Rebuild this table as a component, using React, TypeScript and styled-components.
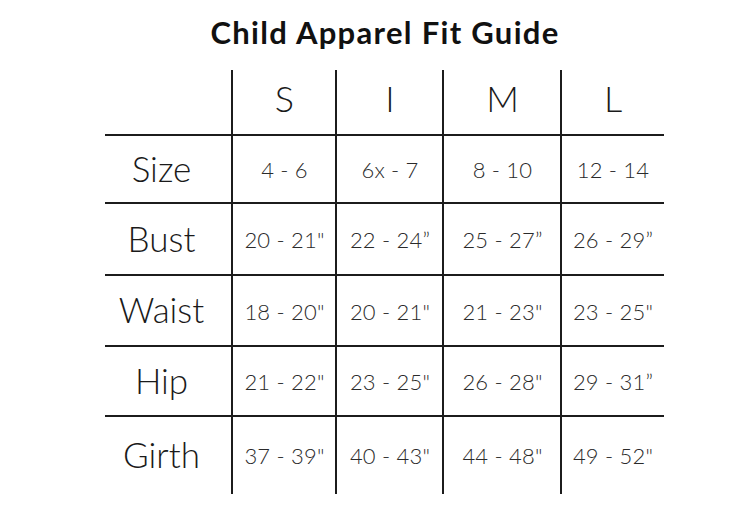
import * as React from 'react';
import styled, { createGlobalStyle } from 'styled-components';

const GlobalStyle = createGlobalStyle`
  html, body {
    margin: 0;
    padding: 0;
    background: #ffffff;
  }
  body {
    font-family: Lato, "Liberation Sans", sans-serif;
    color: #222;
  }
`;

const Page = styled.div`
  width: 740px;
  height: 520px;
  display: flex;
  flex-direction: column;
  align-items: flex-start;
`;

const Title = styled.h1`
  align-self: stretch;
  margin: 0;
  padding: 15px 0 21px 30px;
  height: 34px;
  line-height: 34px;
  text-align: center;
  font-size: 31px;
  font-weight: 700;
  letter-spacing: 1.3px;
  color: #111;
`;

const Table = styled.div`
  margin-left: 105px;
  display: grid;
  grid-template-columns: 127px 104px 107px 118px 103px;
  grid-template-rows: 65px 68px 72px 71px 70px 78px;
`;

const Cell = styled.div<{ $left?: boolean; $top?: boolean; $pad?: number }>`
  display: flex;
  align-items: center;
  justify-content: center;
  box-sizing: border-box;
  border-left: ${(p) => (p.$left ? '2px solid #1c1c1c' : 'none')};
  border-top: ${(p) => (p.$top ? '2px solid #1c1c1c' : 'none')};
  margin-left: ${(p) => (p.$left ? '-1px' : '0')};
  margin-top: ${(p) => (p.$top ? '-1px' : '0')};
  padding-right: ${(p) => p.$pad ?? 0}px;
`;

const HeadText = styled.span`
  font-size: 36px;
  font-weight: 300;
  color: #1a1a1a;
  margin-top: -10px;
`;

const LabelText = styled.span`
  font-size: 35px;
  font-weight: 300;
  color: #1a1a1a;
  margin-top: -4px;
`;

const ValueText = styled.span`
  font-size: 22px;
  font-weight: 300;
  letter-spacing: 0.2px;
  color: #2a2a2a;
  white-space: nowrap;
`;

const sizes = ['S', 'I', 'M', 'L'];

const rows: { label: string; values: string[] }[] = [
  { label: 'Size', values: ['4 - 6', '6x - 7', '8 - 10', '12 - 14'] },
  { label: 'Bust', values: ['20 - 21"', '22 - 24\u201d', '25 - 27\u201d', '26 - 29\u201d'] },
  { label: 'Waist', values: ['18 - 20"', '20 - 21"', '21 - 23"', '23 - 25"'] },
  { label: 'Hip', values: ['21 - 22"', '23 - 25"', '26 - 28"', '29 - 31\u201d'] },
  { label: 'Girth', values: ['37 - 39"', '40 - 43"', '44 - 48"', '49 - 52"'] },
];

function App() {
  return (
    <Page>
      <GlobalStyle />
      <Title>Child Apparel Fit Guide</Title>
      <Table>
        <Cell />
        {sizes.map((s) => (
          <Cell key={s} $left>
            <HeadText>{s}</HeadText>
          </Cell>
        ))}
        {rows.map((r) => (
          <React.Fragment key={r.label}>
            <Cell $top $pad={14}>
              <LabelText>{r.label}</LabelText>
            </Cell>
            {r.values.map((v, i) => (
              <Cell key={i} $top $left>
                <ValueText>{v}</ValueText>
              </Cell>
            ))}
          </React.Fragment>
        ))}
      </Table>
    </Page>
  );
}

export default App;
